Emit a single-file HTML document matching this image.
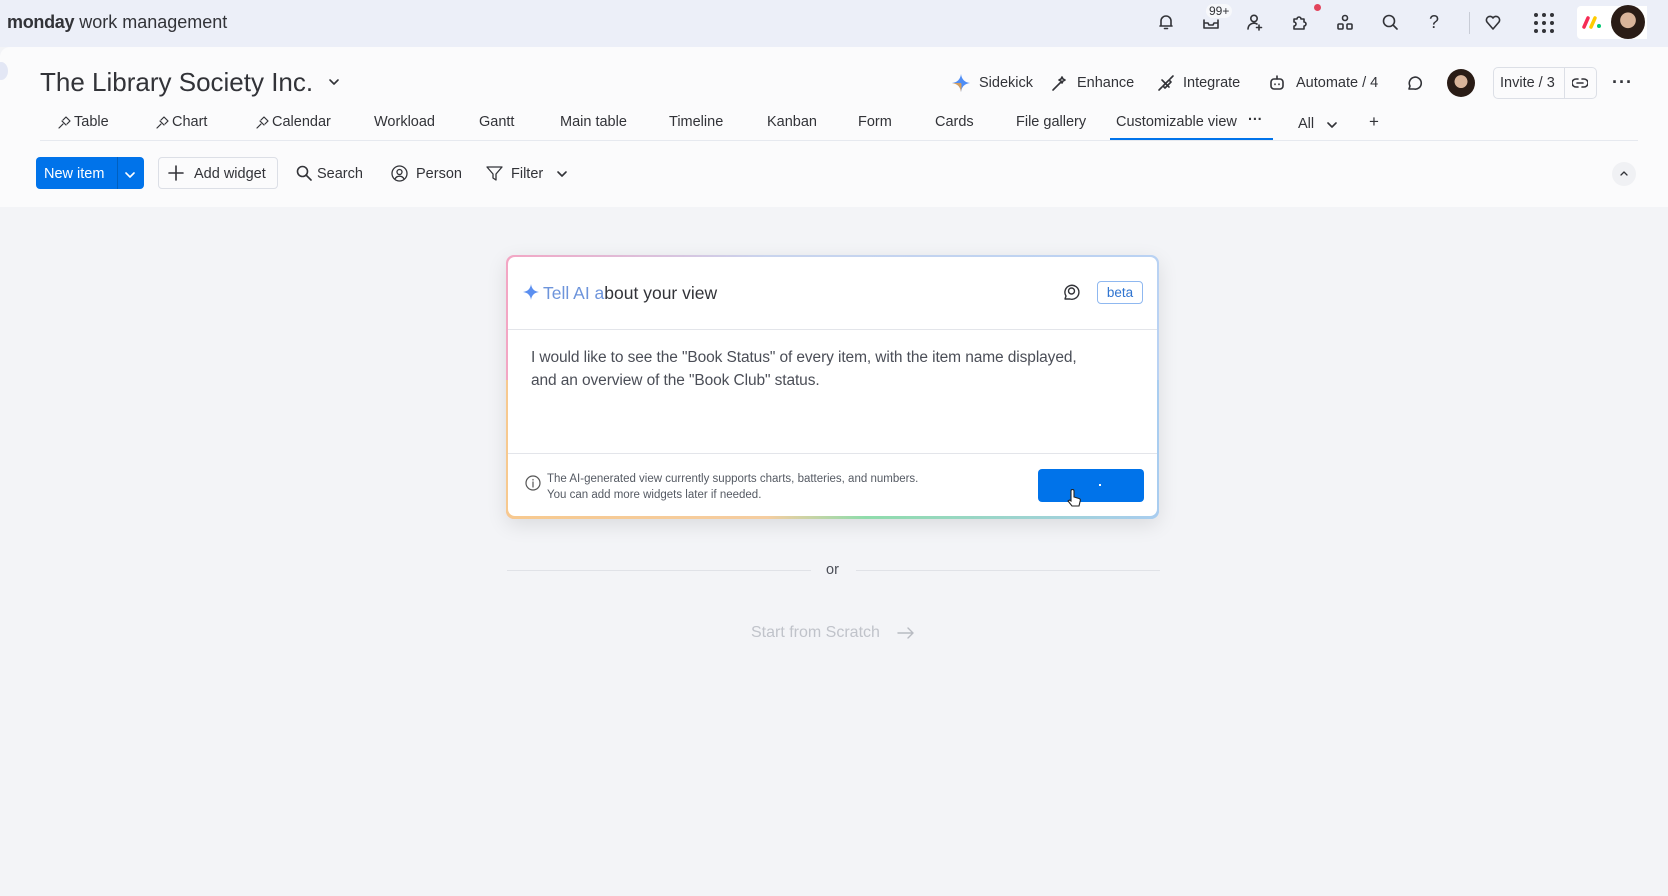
<!DOCTYPE html>
<html><head><meta charset="utf-8"><style>
*{box-sizing:border-box;margin:0;padding:0}
body{width:1668px;height:896px;overflow:hidden;background:#f3f4f7;font-family:"Liberation Sans",sans-serif;color:#323338;position:relative}
.a{position:absolute;white-space:nowrap}
.top{position:absolute;left:0;top:0;width:1668px;height:47px;background:#eceff8}
.panel{position:absolute;left:0;top:47px;width:1668px;height:160px;background:#fbfbfc;border-top-left-radius:10px}
.ic{position:absolute;stroke:#323338;fill:none;stroke-width:1.6;stroke-linecap:round;stroke-linejoin:round}
.tab{position:absolute;top:114px;font-size:14.5px;color:#323338}
.tl{font-size:14.5px;color:#323338;top:166px}
</style></head><body>
<div class="top"></div>
<div class="a" style="left:7px;top:12px;font-size:18px;color:#323338"><b style="letter-spacing:-0.3px">monday</b> work management</div>

<svg class="ic" style="left:1157px;top:13px" width="18" height="18" viewBox="0 0 18 18"><path d="M4 13V8a5 5 0 0110 0v5H4zM3 13h12M7.5 15.5h3"/></svg>
<svg class="ic" style="left:1202px;top:14px" width="18" height="16" viewBox="0 0 18 16"><path d="M2 6v8h14V6M2 9h4l1 2h4l1-2h4"/></svg>
<div class="a" style="left:1206px;top:4px;font-size:12px;background:#f7f8fb;border-radius:8px;padding:0 3px">99+</div>
<svg class="ic" style="left:1246px;top:13px" width="18" height="18" viewBox="0 0 18 18"><circle cx="8" cy="5.5" r="3.2"/><path d="M2 16a6 6 0 019-5M13 12v5M10.5 14.5h5"/></svg>
<svg class="ic" style="left:1291px;top:13px" width="18" height="18" viewBox="0 0 18 18"><path d="M3 6h3a2 2 0 114 0h3v3a2 2 0 110 4v3H3v-3a2 2 0 100-4z"/></svg>
<div class="a" style="left:1314px;top:4px;width:7px;height:7px;border-radius:50%;background:#e2445c"></div>
<svg class="ic" style="left:1336px;top:13px" width="18" height="18" viewBox="0 0 18 18"><circle cx="9" cy="5" r="2.5"/><rect x="2" y="11" width="5" height="5" rx="1"/><rect x="11" y="11" width="5" height="5" rx="1"/></svg>
<svg class="ic" style="left:1381px;top:13px" width="18" height="18" viewBox="0 0 18 18"><circle cx="8" cy="8" r="5.5"/><path d="M12 12l4 4"/></svg>
<div class="a" style="left:1429px;top:12px;font-size:18px">?</div>
<div class="a" style="left:1469px;top:12px;width:1px;height:22px;background:#c8ccd6"></div>
<svg class="ic" style="left:1484px;top:13px" width="18" height="18" viewBox="0 0 18 18"><path d="M9 16L3 9a3.5 3.5 0 016-4 3.5 3.5 0 016 4z"/></svg>
<svg style="position:absolute;left:1533px;top:12px" width="22" height="22" viewBox="0 0 22 22" fill="#323338"><circle cx="3" cy="3" r="2"/><circle cx="11" cy="3" r="2"/><circle cx="19" cy="3" r="2"/><circle cx="3" cy="11" r="2"/><circle cx="11" cy="11" r="2"/><circle cx="19" cy="11" r="2"/><circle cx="3" cy="19" r="2"/><circle cx="11" cy="19" r="2"/><circle cx="19" cy="19" r="2"/></svg>
<div class="a" style="left:1577px;top:6px;width:70px;height:33px;background:#fff;border-radius:4px 0 0 4px"></div>
<svg style="position:absolute;left:1582px;top:15px" width="20" height="14" viewBox="0 0 20 14"><path d="M2 12L6 3" stroke="#f62b54" stroke-width="3.5" stroke-linecap="round"/><path d="M9 12L13 3" stroke="#ffcc00" stroke-width="3.5" stroke-linecap="round"/><circle cx="17" cy="11" r="2" fill="#00ca72"/></svg>
<div class="a" style="left:1611px;top:5px;width:34px;height:34px;border-radius:50%;background:radial-gradient(circle at 50% 45%,#d9b49a 0 30%,#2a1c16 32%)"></div>

<div class="panel"></div>
<div class="a" style="left:-6px;top:62px;width:14px;height:18px;border-radius:50%;background:#e3e7f5"></div>
<div class="a" style="left:40px;top:67px;font-size:26px;color:#323338">The Library Society Inc.</div>
<svg class="ic" style="left:328px;top:78px" width="12" height="8" viewBox="0 0 12 8"><path d="M2 2l4 4 4-4"/></svg>

<svg style="position:absolute;left:952px;top:74px" width="18" height="18" viewBox="0 0 18 18"><path d="M9 0Q10 8 18 9Q10 10 9 18Q8 10 0 9Q8 8 9 0z" fill="#4f8df5"/><path d="M9 9Q10 10 9 18Q8 10 0 9z" fill="#f5a23a" opacity=".8"/></svg>
<div class="a" style="left:979px;top:75px;font-size:14.5px">Sidekick</div>
<svg class="ic" style="left:1051px;top:74px" width="18" height="18" viewBox="0 0 18 18"><path d="M2 16l8-8M11 3l1 2 2 1-2 1-1 2-1-2-2-1 2-1z"/></svg>
<div class="a" style="left:1077px;top:75px;font-size:14.5px">Enhance</div>
<svg class="ic" style="left:1157px;top:74px" width="18" height="18" viewBox="0 0 18 18"><path d="M5 6l7 7M6 12l6-6 2 2-6 6zM2 16l3-3M13 5l3-3"/></svg>
<div class="a" style="left:1183px;top:75px;font-size:14.5px">Integrate</div>
<svg class="ic" style="left:1268px;top:74px" width="18" height="18" viewBox="0 0 18 18"><rect x="3" y="5" width="12" height="10" rx="3"/><path d="M9 2v3M7 10v.5M11 10v.5"/></svg>
<div class="a" style="left:1296px;top:75px;font-size:14.5px">Automate / 4</div>
<svg class="ic" style="left:1405px;top:74px" width="18" height="18" viewBox="0 0 18 18"><path d="M4 15l1-3a6 6 0 114 3z"/></svg>
<div class="a" style="left:1447px;top:69px;width:28px;height:28px;border-radius:50%;background:radial-gradient(circle at 50% 45%,#d9b49a 0 30%,#2a1c16 32%)"></div>
<div class="a" style="left:1493px;top:67px;width:104px;height:32px;border:1px solid #dcdfe6;border-radius:5px"></div>
<div class="a" style="left:1564px;top:67px;width:1px;height:32px;background:#dcdfe6"></div>
<div class="a" style="left:1500px;top:75px;font-size:14.5px">Invite / 3</div>
<svg class="ic" style="left:1572px;top:76px" width="16" height="14" viewBox="0 0 16 14"><path d="M6 3H4a4 4 0 000 8h2M10 3h2a4 4 0 010 8h-2M5 7h6"/></svg>
<div class="a" style="left:1612px;top:72px;font-size:18px;font-weight:bold;letter-spacing:1px">···</div>

<svg class="ic" style="left:58px;top:116px;stroke-width:1.2" width="13" height="13" viewBox="0 0 13 13"><path d="M1 12l4-4M4 5l4 4M5 4l3-3 4 4-3 3"/></svg>
<div class="tab" style="left:74px">Table</div>
<svg class="ic" style="left:156px;top:116px;stroke-width:1.2" width="13" height="13" viewBox="0 0 13 13"><path d="M1 12l4-4M4 5l4 4M5 4l3-3 4 4-3 3"/></svg>
<div class="tab" style="left:172px">Chart</div>
<svg class="ic" style="left:256px;top:116px;stroke-width:1.2" width="13" height="13" viewBox="0 0 13 13"><path d="M1 12l4-4M4 5l4 4M5 4l3-3 4 4-3 3"/></svg>
<div class="tab" style="left:272px">Calendar</div>
<div class="tab" style="left:374px">Workload</div>
<div class="tab" style="left:479px">Gantt</div>
<div class="tab" style="left:560px">Main table</div>
<div class="tab" style="left:669px">Timeline</div>
<div class="tab" style="left:767px">Kanban</div>
<div class="tab" style="left:858px">Form</div>
<div class="tab" style="left:935px">Cards</div>
<div class="tab" style="left:1016px">File gallery</div>
<div class="tab" style="left:1116px">Customizable view</div>
<div class="tab" style="left:1248px;top:112px;font-weight:bold">···</div>
<div class="tab" style="left:1298px;top:116px">All</div>
<svg class="ic" style="left:1326px;top:121px" width="12" height="8" viewBox="0 0 12 8"><path d="M2 2l4 4 4-4"/></svg>
<div class="tab" style="left:1369px;top:112px;font-size:17px">+</div>
<div class="a" style="left:40px;top:140px;width:1598px;height:1px;background:#e6e9ef"></div>
<div class="a" style="left:1110px;top:138px;width:163px;height:2px;background:#0073ea"></div>

<div class="a" style="left:36px;top:157px;width:108px;height:32px;background:#0073ea;border-radius:4px"></div>
<div class="a" style="left:44px;top:166px;font-size:14.5px;color:#fff">New item</div>
<div class="a" style="left:117px;top:157px;width:1px;height:32px;background:#0060c0"></div>
<svg class="ic" style="left:124px;top:171px;stroke:#fff" width="12" height="8" viewBox="0 0 12 8"><path d="M2 2l4 4 4-4"/></svg>
<div class="a" style="left:158px;top:157px;width:120px;height:32px;border:1px solid #dcdfe6;border-radius:4px"></div>
<svg class="ic" style="left:168px;top:165px" width="16" height="16" viewBox="0 0 16 16"><path d="M8 1v14M1 8h14"/></svg>
<div class="a tl" style="left:194px">Add widget</div>
<svg class="ic" style="left:296px;top:165px" width="16" height="16" viewBox="0 0 16 16"><circle cx="6.5" cy="6.5" r="5"/><path d="M10 10l5 5"/></svg>
<div class="a tl" style="left:317px">Search</div>
<svg class="ic" style="left:391px;top:165px;stroke-width:1.3" width="17" height="17" viewBox="0 0 17 17"><circle cx="8.5" cy="8.5" r="7.5"/><circle cx="8.5" cy="7" r="2.5"/><path d="M4 14a5 5 0 019 0"/></svg>
<div class="a tl" style="left:416px">Person</div>
<svg class="ic" style="left:486px;top:165px;stroke-width:1.3" width="17" height="17" viewBox="0 0 17 17"><path d="M1 2h15l-6 7v6l-3-2V9z"/></svg>
<div class="a tl" style="left:511px">Filter</div>
<svg class="ic" style="left:556px;top:170px" width="12" height="8" viewBox="0 0 12 8"><path d="M2 2l4 4 4-4"/></svg>
<div class="a" style="left:1612px;top:162px;width:24px;height:24px;border-radius:50%;background:#f0f1f4"></div>
<svg class="ic" style="left:1619px;top:170px;stroke-width:1.3" width="10" height="7" viewBox="0 0 10 7"><path d="M2 5l3-3 3 3"/></svg>

<div class="a" style="left:506px;top:255px;width:653px;height:264px;border-radius:8px;background:linear-gradient(90deg,#f3a6c4,#c9d4ee 40%,#b9d2f3);box-shadow:0 6px 20px rgba(0,0,0,.10)"></div>
<div class="a" style="left:506px;top:380px;width:653px;height:139px;border-radius:0 0 8px 8px;background:linear-gradient(90deg,#f7c98f,#f5cda0 40%,#8fdcab 55%,#a9cdf0)"></div>
<div class="a" style="left:508px;top:257px;width:649px;height:259px;border-radius:7px;background:#fff"></div>
<svg style="position:absolute;left:523px;top:284px" width="16" height="16" viewBox="0 0 18 18"><path d="M9 0Q10 8 18 9Q10 10 9 18Q8 10 0 9Q8 8 9 0z" fill="#5b8ff0"/></svg>
<div class="a" style="left:543px;top:283px;font-size:17.5px;color:#323338"><span style="color:#6d94db">Tell AI a</span>bout your view</div>
<svg class="ic" style="left:1062px;top:283px;stroke-width:1.4" width="18" height="18" viewBox="0 0 18 18"><path d="M3 16l1-3a7 7 0 114 3z"/><circle cx="9.5" cy="8" r="3"/></svg>
<div class="a" style="left:1097px;top:281px;width:46px;height:23px;border:1px solid #8fb8f0;border-radius:4px;font-size:13.5px;color:#2f74d0;text-align:center;line-height:21px">beta</div>
<div class="a" style="left:508px;top:329px;width:649px;height:1px;background:#e3e5ea"></div>
<div class="a" style="left:531px;top:347px;font-size:15.5px;line-height:22.5px;color:#4b4e57;white-space:normal;width:560px;letter-spacing:-0.1px">I would like to see the "Book Status" of every item, with the item name displayed, and an overview of the "Book Club" status.</div>
<div class="a" style="left:508px;top:453px;width:649px;height:1px;background:#e3e5ea"></div>
<svg class="ic" style="left:525px;top:475px;stroke:#555;stroke-width:1.2" width="16" height="16" viewBox="0 0 16 16"><circle cx="8" cy="8" r="7"/><path d="M8 7v5M8 4.5v.5"/></svg>
<div class="a" style="left:547px;top:471px;font-size:11.5px;line-height:16px;color:#555a63">The AI-generated view currently supports charts, batteries, and numbers.<br>You can add more widgets later if needed.</div>
<div class="a" style="left:1038px;top:469px;width:106px;height:33px;background:#0073ea;border-radius:4px"></div>
<div class="a" style="left:1099px;top:484px;width:2px;height:2px;background:#fff"></div>
<svg style="position:absolute;left:1066px;top:489px" width="16" height="20" viewBox="0 0 16 20"><path d="M5 2a1.5 1.5 0 013 0v6l5 1.5c1 .3 1.5 1 1.3 2L13 17H6l-4-5 1.5-1L5 12z" fill="#fff" stroke="#222" stroke-width="1.1"/></svg>

<div class="a" style="left:507px;top:570px;width:304px;height:1px;background:#e0e2e7"></div>
<div class="a" style="left:856px;top:570px;width:304px;height:1px;background:#e0e2e7"></div>
<div class="a" style="left:826px;top:562px;font-size:14.5px;color:#4b4e57">or</div>
<div class="a" style="left:751px;top:624px;font-size:16px;color:#c0c3ca">Start from Scratch</div>
<svg class="ic" style="left:897px;top:627px;stroke:#b8bbc2;stroke-width:1.4" width="18" height="12" viewBox="0 0 18 12"><path d="M1 6h15M11 1l5 5-5 5"/></svg>
</body></html>
